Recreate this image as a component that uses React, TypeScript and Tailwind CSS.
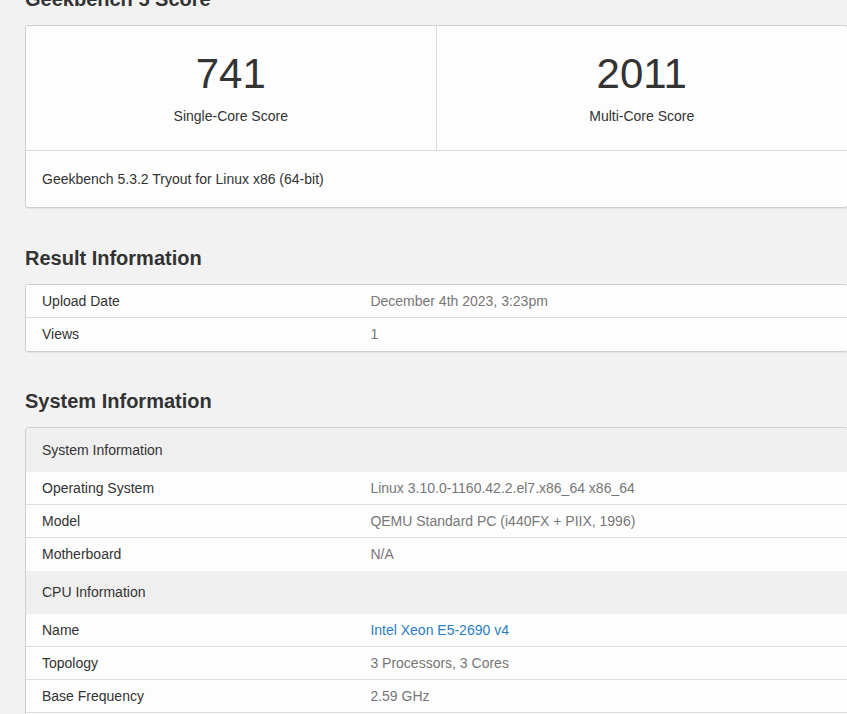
import React from "react";

type Row = { label: string; value: string; link?: boolean };
type Section = { title: string; rows: Row[] };

const resultRows: Row[] = [
  { label: "Upload Date", value: "December 4th 2023, 3:23pm" },
  { label: "Views", value: "1" },
];

const systemSections: Section[] = [
  {
    title: "System Information",
    rows: [
      { label: "Operating System", value: "Linux 3.10.0-1160.42.2.el7.x86_64 x86_64" },
      { label: "Model", value: "QEMU Standard PC (i440FX + PIIX, 1996)" },
      { label: "Motherboard", value: "N/A" },
    ],
  },
  {
    title: "CPU Information",
    rows: [
      { label: "Name", value: "Intel Xeon E5-2690 v4", link: true },
      { label: "Topology", value: "3 Processors, 3 Cores" },
      { label: "Base Frequency", value: "2.59 GHz" },
      { label: "Cluster 1", value: "3 Cores" },
      { label: "L1 Instruction Cache", value: "32.0 KB x 1" },
    ],
  },
];

function Heading({ children, className = "" }: { children: React.ReactNode; className?: string }) {
  return (
    <h2 className={`text-[20px] leading-[22px] font-bold text-[#333] ${className}`}>{children}</h2>
  );
}

function DataRow({ row }: { row: Row }) {
  return (
    <div className="flex h-[33px] items-center border-b border-[#dddddd] bg-[#fdfdfd] text-[14px] last:border-b-0">
      <div className="w-[40%] pl-4 text-[#333]">{row.label}</div>
      <div className={`flex-1 pl-4 ${row.link ? "text-[#2a7dc0]" : "text-[#777]"}`}>{row.value}</div>
    </div>
  );
}

export default function App() {
  return (
    <div
      className="min-h-screen w-full overflow-hidden bg-[#f2f2f2]"
      style={{ fontFamily: '"Liberation Sans", Arial, sans-serif' }}
    >
      <div className="w-[823px] ml-[25px] pb-10">
        {/* Score */}
        <Heading className="-mt-[12px] mb-[15px]">Geekbench 5 Score</Heading>
        <div className="rounded-[3px] border border-[#cfcfcf] bg-[#fdfdfd] shadow-[0_1px_1px_rgba(0,0,0,0.06)]">
          <div className="flex border-b border-[#dadada]">
            <div className="w-1/2 border-r border-[#dadada] pt-[25px] pb-[24px] text-center">
              <div className="text-[42px] leading-[46px] text-[#333]">741</div>
              <div className="mt-[9px] text-[14px] leading-[20px] text-[#333]">Single-Core Score</div>
            </div>
            <div className="w-1/2 pt-[25px] pb-[24px] text-center">
              <div className="text-[42px] leading-[46px] text-[#333]">2011</div>
              <div className="mt-[9px] text-[14px] leading-[20px] text-[#333]">Multi-Core Score</div>
            </div>
          </div>
          <div className="py-[18px] pl-4 text-[14px] leading-[20px] text-[#333]">
            Geekbench 5.3.2 Tryout for Linux x86 (64-bit)
          </div>
        </div>

        {/* Result Information */}
        <Heading className="mt-[39px] mb-[15px]">Result Information</Heading>
        <div className="overflow-hidden rounded-[3px] border border-[#cfcfcf] bg-[#fdfdfd] shadow-[0_1px_1px_rgba(0,0,0,0.06)]">
          {resultRows.map((r) => (
            <DataRow key={r.label} row={r} />
          ))}
        </div>

        {/* System Information */}
        <Heading className="mt-[38px] mb-[15px]">System Information</Heading>
        <div className="overflow-hidden rounded-[3px] border border-[#cfcfcf] bg-[#fdfdfd] shadow-[0_1px_1px_rgba(0,0,0,0.06)]">
          {systemSections.map((s, i) => (
            <div key={s.title}>
              <div
                className={`flex items-center bg-[#efefef] pl-4 text-[14px] text-[#333] ${
                  i === 0 ? "h-[44px]" : "h-[43px]"
                }`}
              >
                {s.title}
              </div>
              {s.rows.map((r) => (
                <DataRow key={r.label} row={r} />
              ))}
            </div>
          ))}
        </div>
      </div>
    </div>
  );
}
